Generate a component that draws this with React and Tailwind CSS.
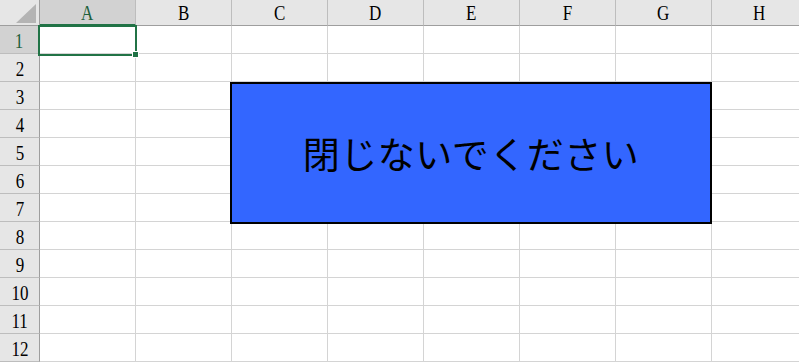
import React from "react";

const cols = ["A", "B", "C", "D", "E", "F", "G", "H"];
const rows = [1, 2, 3, 4, 5, 6, 7, 8, 9, 10, 11, 12];

function Lbl({ children }) {
  return <span className="inline-block scale-x-[0.85] leading-none">{children}</span>;
}

export default function App() {
  return (
    <div className="relative w-[799px] h-[363px] overflow-hidden bg-white" style={{ fontFamily: '"Liberation Serif", serif' }}>
      <div className="grid grid-cols-[40px_repeat(8,96px)] grid-rows-[26px_repeat(12,28px)] w-[808px]">
        <div className="relative bg-[#e6e6e6] border-r border-b border-[#9e9e9e]">
          <svg className="absolute left-[16px] top-[4px]" width="20" height="19" viewBox="0 0 20 19">
            <polygon points="20,0 20,19 0,19" fill="#b4b4b4" />
          </svg>
        </div>
        {cols.map((c, i) => (
          <div
            key={c}
            className={
              i === 0
                ? "flex items-center justify-center bg-[#d2d2d2] border-r border-[#bdbdbd] border-b-2 border-b-[#217346] text-[20px] text-[#1d5f3b] pt-[1px]"
                : "flex items-center justify-center bg-[#e6e6e6] border-r border-[#bdbdbd] border-b border-b-[#9e9e9e] text-[20px] text-black"
            }
          >
            <Lbl>{c}</Lbl>
          </div>
        ))}
        {rows.map((r) => (
          <React.Fragment key={r}>
            <div
              className={
                r === 1
                  ? "flex items-center justify-center bg-[#d2d2d2] border-r-2 border-r-[#217346] border-b border-b-[#bdbdbd] text-[20px] text-[#1d5f3b] pt-[2px]"
                  : "flex items-center justify-center bg-[#e6e6e6] border-r border-r-[#9e9e9e] border-b border-b-[#bdbdbd] text-[20px] text-black pt-[2px]"
              }
            >
              <Lbl>{r}</Lbl>
            </div>
            {cols.map((c) => (
              <div key={c} className="border-r border-b border-[#d4d4d4]" />
            ))}
          </React.Fragment>
        ))}
      </div>

      {/* Selected cell A1 */}
      <div className="absolute left-[38px] top-[25px] w-[99px] h-[31px] border-2 border-[#217346]" />
      <div className="absolute left-[132px] top-[51px] w-[7px] h-[7px] bg-[#217346] border border-white" />

      {/* Shape */}
      <div className="absolute left-[230px] top-[82px] w-[482px] h-[142px] border-2 border-black bg-[#3366ff] flex items-center justify-center">
        <span
          className="text-[37px] text-black leading-none tracking-[0.5px]"
          style={{ fontFamily: '"Noto Sans CJK JP", sans-serif' }}
        >
          閉じないでください
        </span>
      </div>
    </div>
  );
}
